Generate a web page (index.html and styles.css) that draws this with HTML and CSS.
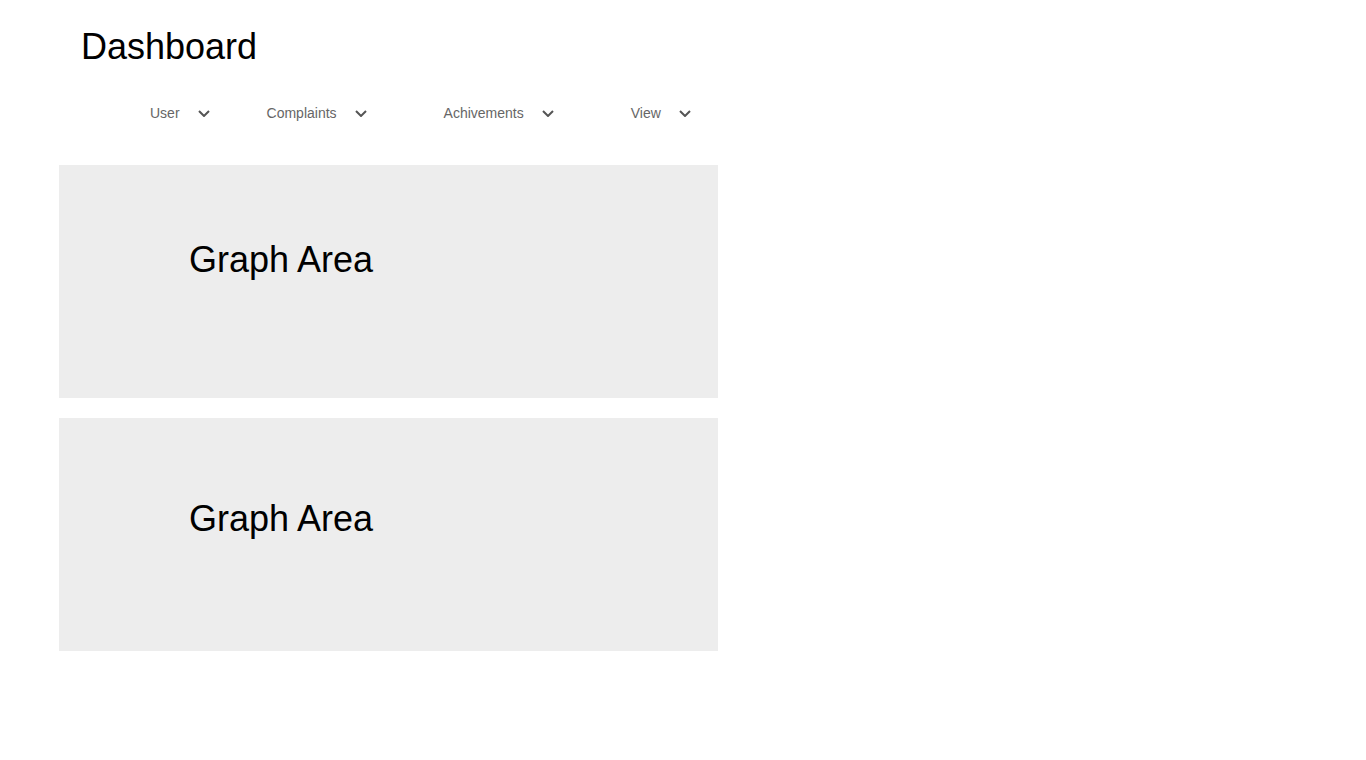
FILE: index.html
```html
<!DOCTYPE html>
<html>
<head>
<meta charset="utf-8">
<title>Dashboard</title>
<link rel="stylesheet" href="styles.css">
</head>
<body>
<div class="page">
  <h1 class="title">Dashboard</h1>
  <nav class="nav">
    <div class="nav-item nav-item-first"><span>User</span><svg class="chev" viewBox="0 0 12 7" width="12" height="7"><polyline points="1,1 6,6 11,1" fill="none" stroke="#555" stroke-width="2"/></svg></div>
    <div class="nav-item nav-item-second"><span>Complaints</span><svg class="chev" viewBox="0 0 12 7" width="12" height="7"><polyline points="1,1 6,6 11,1" fill="none" stroke="#555" stroke-width="2"/></svg></div>
    <div class="nav-item"><span>Achivements</span><svg class="chev" viewBox="0 0 12 7" width="12" height="7"><polyline points="1,1 6,6 11,1" fill="none" stroke="#555" stroke-width="2"/></svg></div>
    <div class="nav-item"><span>View</span><svg class="chev" viewBox="0 0 12 7" width="12" height="7"><polyline points="1,1 6,6 11,1" fill="none" stroke="#555" stroke-width="2"/></svg></div>
  </nav>
  <section class="panels">
    <div class="panel"><div class="panel-label">Graph Area</div></div>
    <div class="panel panel-lower"><div class="panel-label">Graph Area</div></div>
  </section>
</div>
</body>
</html>
```
FILE: styles.css
```css
html, body {
  margin: 0;
  padding: 0;
  background: #fff;
}
.page {
  font-family: "Liberation Sans", Arial, sans-serif;
  color: #000;
  padding-top: 26px;
}
.title {
  margin: 0;
  padding-left: 81px;
  font-size: 36px;
  font-weight: normal;
  line-height: 41px;
}
.nav {
  display: flex;
  align-items: center;
  height: 16px;
  margin-top: 38px;
  padding-left: 150px;
}
.nav-item {
  display: flex;
  align-items: center;
  gap: 18px;
  font-size: 14px;
  line-height: 16px;
  color: #666;
  margin-left: 77px;
}
.nav-item-first {
  margin-left: 0;
}
.nav-item-second {
  margin-left: 57px;
}
.chev {
  display: block;
}
.panels {
  display: flex;
  flex-direction: column;
  gap: 20px;
  margin-top: 44px;
  padding-left: 59px;
}
.panel {
  width: 659px;
  height: 233px;
  background: #ededed;
  box-sizing: border-box;
  padding-top: 74px;
  padding-left: 130px;
}
.panel-lower {
  padding-top: 80px;
}
.panel-label {
  font-size: 36px;
  line-height: 41px;
}
```
